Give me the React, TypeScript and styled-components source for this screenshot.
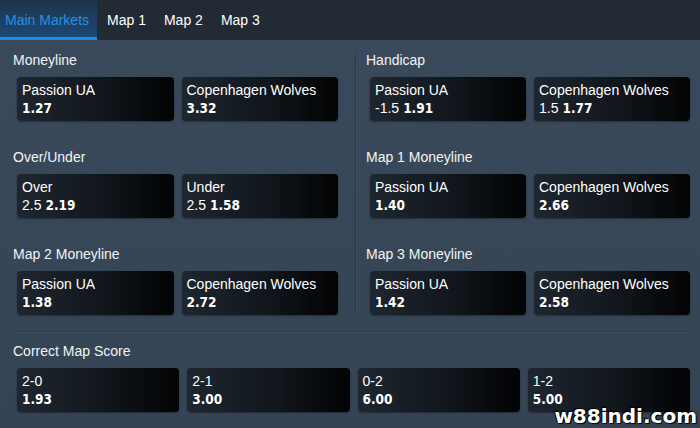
import styled, { createGlobalStyle } from 'styled-components'

const GlobalStyle = createGlobalStyle`
  html, body {
    margin: 0;
    padding: 0;
    background: #364555;
  }
  body {
    font-family: "Liberation Sans", Arial, sans-serif;
  }
`

const Page = styled('div')`
  position: relative;
  width: 700px;
  height: 428px;
  overflow: hidden;
  background: linear-gradient(180deg, #3a4a5c 0%, #354454 100%);
`

const TabBar = styled('nav')`
  display: flex;
  gap: 5px;
  height: 40px;
  background: #222a34;
`

const Tab = styled('div')<{ $active?: boolean }>`
  display: flex;
  align-items: center;
  padding: 0 8px 0 5px;
  font-size: 14px;
  color: ${p => (p.$active ? '#2a8ee2' : '#ffffff')};
  background: ${p => (p.$active ? 'linear-gradient(180deg, #1f344b 0%, #1b4a78 100%)' : 'transparent')};
  box-shadow: ${p => (p.$active ? 'inset 0 -3px 0 #1e8ae6' : 'none')};
`

const Body = styled('main')`
  padding-top: 12px;
`

const Columns = styled('div')`
  display: grid;
  grid-template-columns: 356px 1fr;
  padding-bottom: 10px;
`

const Column = styled('div')<{ $left?: boolean }>`
  padding: ${p => (p.$left ? '0 17px 0 13px' : '0 10px 0 10px')};
  border-right: ${p => (p.$left ? '1px solid #2b3846' : 'none')};
  box-shadow: ${p => (p.$left ? '1px 0 0 #3e4e60' : 'none')};
`

const Market = styled('section')`
  & + & {
    margin-top: 28px;
  }
`

const Title = styled('h3')`
  margin: 0 0 8px;
  font-size: 14px;
  font-weight: normal;
  line-height: 17px;
  color: #f2f4f6;
`

const CardRow = styled('div')<{ $cols: number }>`
  display: grid;
  grid-template-columns: repeat(${p => p.$cols}, 1fr);
  gap: 8px;
  padding-left: 4px;
`

const OddsCard = styled('div')`
  height: 44px;
  box-sizing: border-box;
  padding: 5px 5px;
  border-radius: 4px;
  background: linear-gradient(90deg, #1e262f 0%, #11161c 55%, #010203 100%);
  box-shadow: 0 1px 2px rgba(0, 0, 0, 0.35);
  color: #ffffff;
`

const Label = styled('div')`
  font-size: 14px;
  line-height: 17px;
  white-space: nowrap;
`

const Price = styled('div')`
  font-size: 14px;
  line-height: 18px;
  white-space: nowrap;
`

const Odds = styled('span')`
  font-family: "DejaVu Sans Condensed", "DejaVu Sans", sans-serif;
  font-weight: bold;
  font-size: 13.5px;
`

const Line = styled('span')`
  margin-right: 4px;
`

const Rule = styled('hr')`
  margin: 6px 10px 0 13px;
  border: none;
  border-top: 1px solid #2b3846;
  border-bottom: 1px solid #3f4f61;
`

const Bottom = styled('div')`
  padding: 10px 10px 0 13px;
`

const Watermark = styled('div')`
  position: absolute;
  right: 3px;
  bottom: 0px;
  font-family: "DejaVu Sans", sans-serif;
  font-weight: bold;
  font-size: 20px;
  color: #ffffff;
  text-shadow: 0 0 2px #000, 1px 1px 1px #000, -1px -1px 1px #000;
`

type Pick = { label: string; odds: string; line?: string }
type MarketData = { title: string; picks: Pick[] }

const left: MarketData[] = [
  { title: 'Moneyline', picks: [{ label: 'Passion UA', odds: '1.27' }, { label: 'Copenhagen Wolves', odds: '3.32' }] },
  { title: 'Over/Under', picks: [{ label: 'Over', line: '2.5', odds: '2.19' }, { label: 'Under', line: '2.5', odds: '1.58' }] },
  { title: 'Map 2 Moneyline', picks: [{ label: 'Passion UA', odds: '1.38' }, { label: 'Copenhagen Wolves', odds: '2.72' }] },
]

const right: MarketData[] = [
  { title: 'Handicap', picks: [{ label: 'Passion UA', line: '-1.5', odds: '1.91' }, { label: 'Copenhagen Wolves', line: '1.5', odds: '1.77' }] },
  { title: 'Map 1 Moneyline', picks: [{ label: 'Passion UA', odds: '1.40' }, { label: 'Copenhagen Wolves', odds: '2.66' }] },
  { title: 'Map 3 Moneyline', picks: [{ label: 'Passion UA', odds: '1.42' }, { label: 'Copenhagen Wolves', odds: '2.58' }] },
]

const scores: Pick[] = [
  { label: '2-0', odds: '1.93' },
  { label: '2-1', odds: '3.00' },
  { label: '0-2', odds: '6.00' },
  { label: '1-2', odds: '5.00' },
]

function Card({ pick }: { pick: Pick }) {
  return (
    <OddsCard>
      <Label>{pick.label}</Label>
      <Price>
        {pick.line && <Line>{pick.line}</Line>}
        <Odds>{pick.odds}</Odds>
      </Price>
    </OddsCard>
  )
}

function MarketBlock({ market }: { market: MarketData }) {
  return (
    <Market>
      <Title>{market.title}</Title>
      <CardRow $cols={market.picks.length}>
        {market.picks.map((p, i) => <Card key={i} pick={p} />)}
      </CardRow>
    </Market>
  )
}

function App() {
  return (
    <Page>
      <GlobalStyle />
      <TabBar>
        <Tab $active>Main Markets</Tab>
        <Tab>Map 1</Tab>
        <Tab>Map 2</Tab>
        <Tab>Map 3</Tab>
      </TabBar>
      <Body>
        <Columns>
          <Column $left>
            {left.map(m => <MarketBlock key={m.title} market={m} />)}
          </Column>
          <Column>
            {right.map(m => <MarketBlock key={m.title} market={m} />)}
          </Column>
        </Columns>
        <Rule />
        <Bottom>
          <MarketBlock market={{ title: 'Correct Map Score', picks: scores }} />
        </Bottom>
      </Body>
      <Watermark>w88indi.com</Watermark>
    </Page>
  )
}

export default App
